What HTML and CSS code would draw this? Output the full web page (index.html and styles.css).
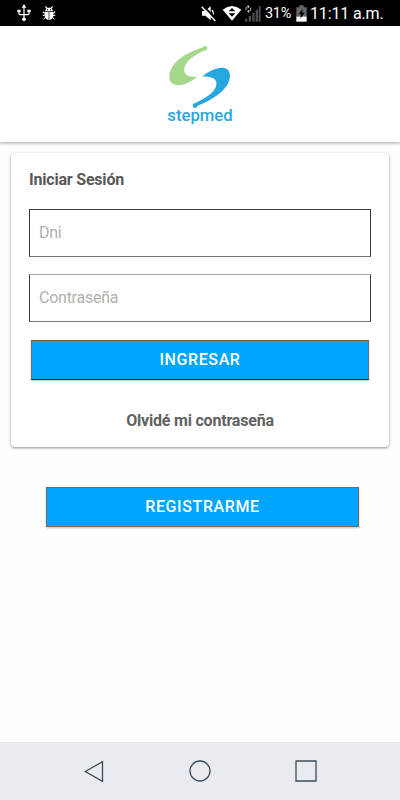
FILE: index.html
```html
<!DOCTYPE html>
<html lang="es">
<head>
<meta charset="utf-8">
<title>Stepmed</title>
<link rel="stylesheet" href="styles.css">
</head>
<body>
<div class="status">
  <div class="status-left">
    <svg width="14" height="18" viewBox="0 0 42 54" fill="none" stroke="#fff" stroke-width="3.5"><path d="M21 8v36M6 20v9q0 3 4 3h11M36 20v9q0 3-4 3H21"/><path d="M21 0l7 11H14zM1 17h10v8H1zM31 17h10v8H31z" fill="#fff" stroke="none"/><circle cx="21" cy="46" r="5.5" fill="#fff" stroke="none"/></svg>
    <svg class="bug" width="14" height="16" viewBox="0 0 42 48" fill="#fff"><path d="M11 3l5 5h10l5-5 2 2-4 6q4 3 4 8H9q0-5 4-8L9 5z"/><path d="M8 21h12v24Q8 43 8 31zM22 21h12v10q0 12-12 14z"/><path d="M9 24H4v-5M33 24h5v-5M9 31H2M33 31h7M10 37l-5 6M32 37l5 6" fill="none" stroke="#fff" stroke-width="3"/><path d="M15 13h3v3h-3zM24 13h3v3h-3z" fill="#000"/></svg>
  </div>
  <div class="status-right">
    <svg width="16" height="17" viewBox="0 0 48 51"><path d="M3 18h9L29 4v42L13 32H3z" fill="#fff"/><path d="M33 15q6 7 3 15" fill="none" stroke="#fff" stroke-width="4"/><path d="M5 1l42 43" stroke="#000" stroke-width="6"/><path d="M2 5l41 43" stroke="#fff" stroke-width="4"/></svg>
    <svg class="wifi" width="20" height="16" viewBox="0 0 60 48"><path d="M2 14Q30-8 58 14L30 47z" fill="#fff"/><path d="M30 9l10 10H20zM20 25h20L30 35z" fill="#000"/></svg>
    <svg class="signal" width="17" height="17" viewBox="0 0 51 51"><path d="M3 41h7v9H3zM14 33h7v17h-7zM25 24h7v26h-7zM35 14h7v36h-7zM44 3h6v47h-6z" fill="#4c4c4c"/><path d="M6 16V8l4-3h5M11 1l5 4-5 4M20 8v8l-4 3h-5M15 15l-4 4 4 4" fill="none" stroke="#ddd" stroke-width="2.5"/></svg>
    <span class="percent">31%</span>
    <svg class="battery" width="11" height="17" viewBox="0 0 33 51"><path d="M10 1h13v6h9v29H1V7h9z" fill="#666"/><path d="M1 35h31v15H1z" fill="#fff"/><path d="M20 11L8 28h7l-2 13 13-18h-7z" fill="#000"/></svg>
    <span class="clock">11:11 a.m.</span>
  </div>
</div>
<header class="header">
  <svg class="logo" width="90" height="95" viewBox="0 0 270 285">
    <path d="M148 32C105 46 43 74 43 124C44 158 91 153 127 122C95 125 80 112 91 88C102 66 128 53 151 42z" fill="#a5d78b"/>
    <circle cx="150" cy="37" r="7" fill="#a5d78b"/>
    <path d="M142 122C174 93 225 81 225 120C222 167 164 194 120 213L117 204C144 189 175 176 183 151C190 130 171 119 142 122z" fill="#27a7df"/>
    <circle cx="120" cy="209" r="7" fill="#27a7df"/>
    <text class="logo-name" x="37" y="256" textLength="196" lengthAdjust="spacingAndGlyphs">stepmed</text>
  </svg>
</header>
<main>
  <form class="card">
    <h1>Iniciar Sesión</h1>
    <input class="field" type="text" placeholder="Dni">
    <input class="field password" type="password" placeholder="Contraseña">
    <button class="button login" type="button">INGRESAR</button>
    <a class="forgot">Olvidé mi contraseña</a>
  </form>
  <button class="button register" type="button">REGISTRARME</button>
</main>
<nav class="nav">
  <svg width="20" height="23" viewBox="0 0 20 23"><path d="M1.3 11.5L18.5 1.7v19.6z"/></svg>
  <svg width="22" height="22" viewBox="0 0 22 22"><circle cx="11" cy="11" r="10"/></svg>
  <svg width="22" height="22" viewBox="0 0 22 22"><path d="M1 1h20v20H1z"/></svg>
</nav>
</body>
</html>
```
FILE: styles.css
```css
* { box-sizing: border-box; }
body {
  margin: 0;
  height: 800px;
  display: flex;
  flex-direction: column;
  background: #fefefe;
  font-family: Roboto, sans-serif;
  overflow: hidden;
}
.status {
  height: 26px;
  flex: none;
  display: flex;
  justify-content: space-between;
  background: #000;
  color: #fff;
  padding: 0 16px 0 17px;
}
.status-left, .status-right { display: flex; align-items: center; }
.bug { margin-left: 11px; }
.wifi { margin-left: 5px; }
.signal { margin-left: 2px; }
.percent { font-size: 14.5px; line-height: 26px; margin: 2px 0 0 4px; width: 27px; letter-spacing: -0.3px; }
.battery { margin-left: 4px; }
.clock { font-size: 16px; letter-spacing: -0.15px; line-height: 26px; margin: 2px 0 0 3px; width: 74px; white-space: nowrap; }
.header {
  height: 116px;
  flex: none;
  display: flex;
  justify-content: center;
  padding-top: 10px;
  background: #fff;
  box-shadow: 0 2px 2px rgba(0, 0, 0, 0.17), 0 3px 4px rgba(0, 0, 0, 0.06);
}
.logo-name {
  font: 500 49px "Roboto", sans-serif;
  fill: #27a7df;
}
main { flex: 1; padding: 11px 11px 0; }
.card {
  height: 294px;
  padding: 17px 18px 0;
  display: flex;
  flex-direction: column;
  background: #fff;
  border-radius: 4px;
  box-shadow: 0 1px 3px rgba(0, 0, 0, 0.45);
}
h1 {
  margin: 0 0 20px;
  font-size: 16px;
  letter-spacing: -0.2px;
  line-height: 19px;
  font-weight: 700;
  color: #595959;
}
.field {
  width: 100%;
  height: 48px;
  flex: none;
  margin: 0;
  padding: 0 9px 1px;
  border: 1px solid #3b3b3b;
  border-bottom-color: #777;
  border-radius: 0;
  background: #fff;
  font: 16px Roboto, sans-serif;
  letter-spacing: -0.25px;
  outline: none;
}
.field::placeholder { color: #b0b0b0; opacity: 1; }
.password { margin-top: 17px; border-top-color: #aaa; }
.button {
  display: block;
  height: 40px;
  flex: none;
  padding: 0;
  border: 1px solid #716b60;
  border-radius: 0;
  background: #00a5ff;
  color: #fff;
  font: 500 16px/38px Roboto, sans-serif;
  letter-spacing: 0.6px;
  box-shadow: 0 1px 2px rgba(0, 0, 0, 0.25);
}
.login { margin: 18px 2px 0; border-top-color: #655f3d; border-bottom-color: #102433; }
.forgot {
  margin-top: 31px;
  text-align: center;
  font-size: 16px;
  letter-spacing: -0.2px;
  line-height: 19px;
  font-weight: 700;
  color: #616161;
}
.register { width: 313px; margin: 40px 0 0 35px; }
.nav {
  height: 58px;
  flex: none;
  display: flex;
  justify-content: space-between;
  align-items: center;
  padding: 0 83px 0 84px;
  background: #e9ebee;
}
.nav svg { fill: none; stroke: #3a4d5a; stroke-width: 1.3; }
```
